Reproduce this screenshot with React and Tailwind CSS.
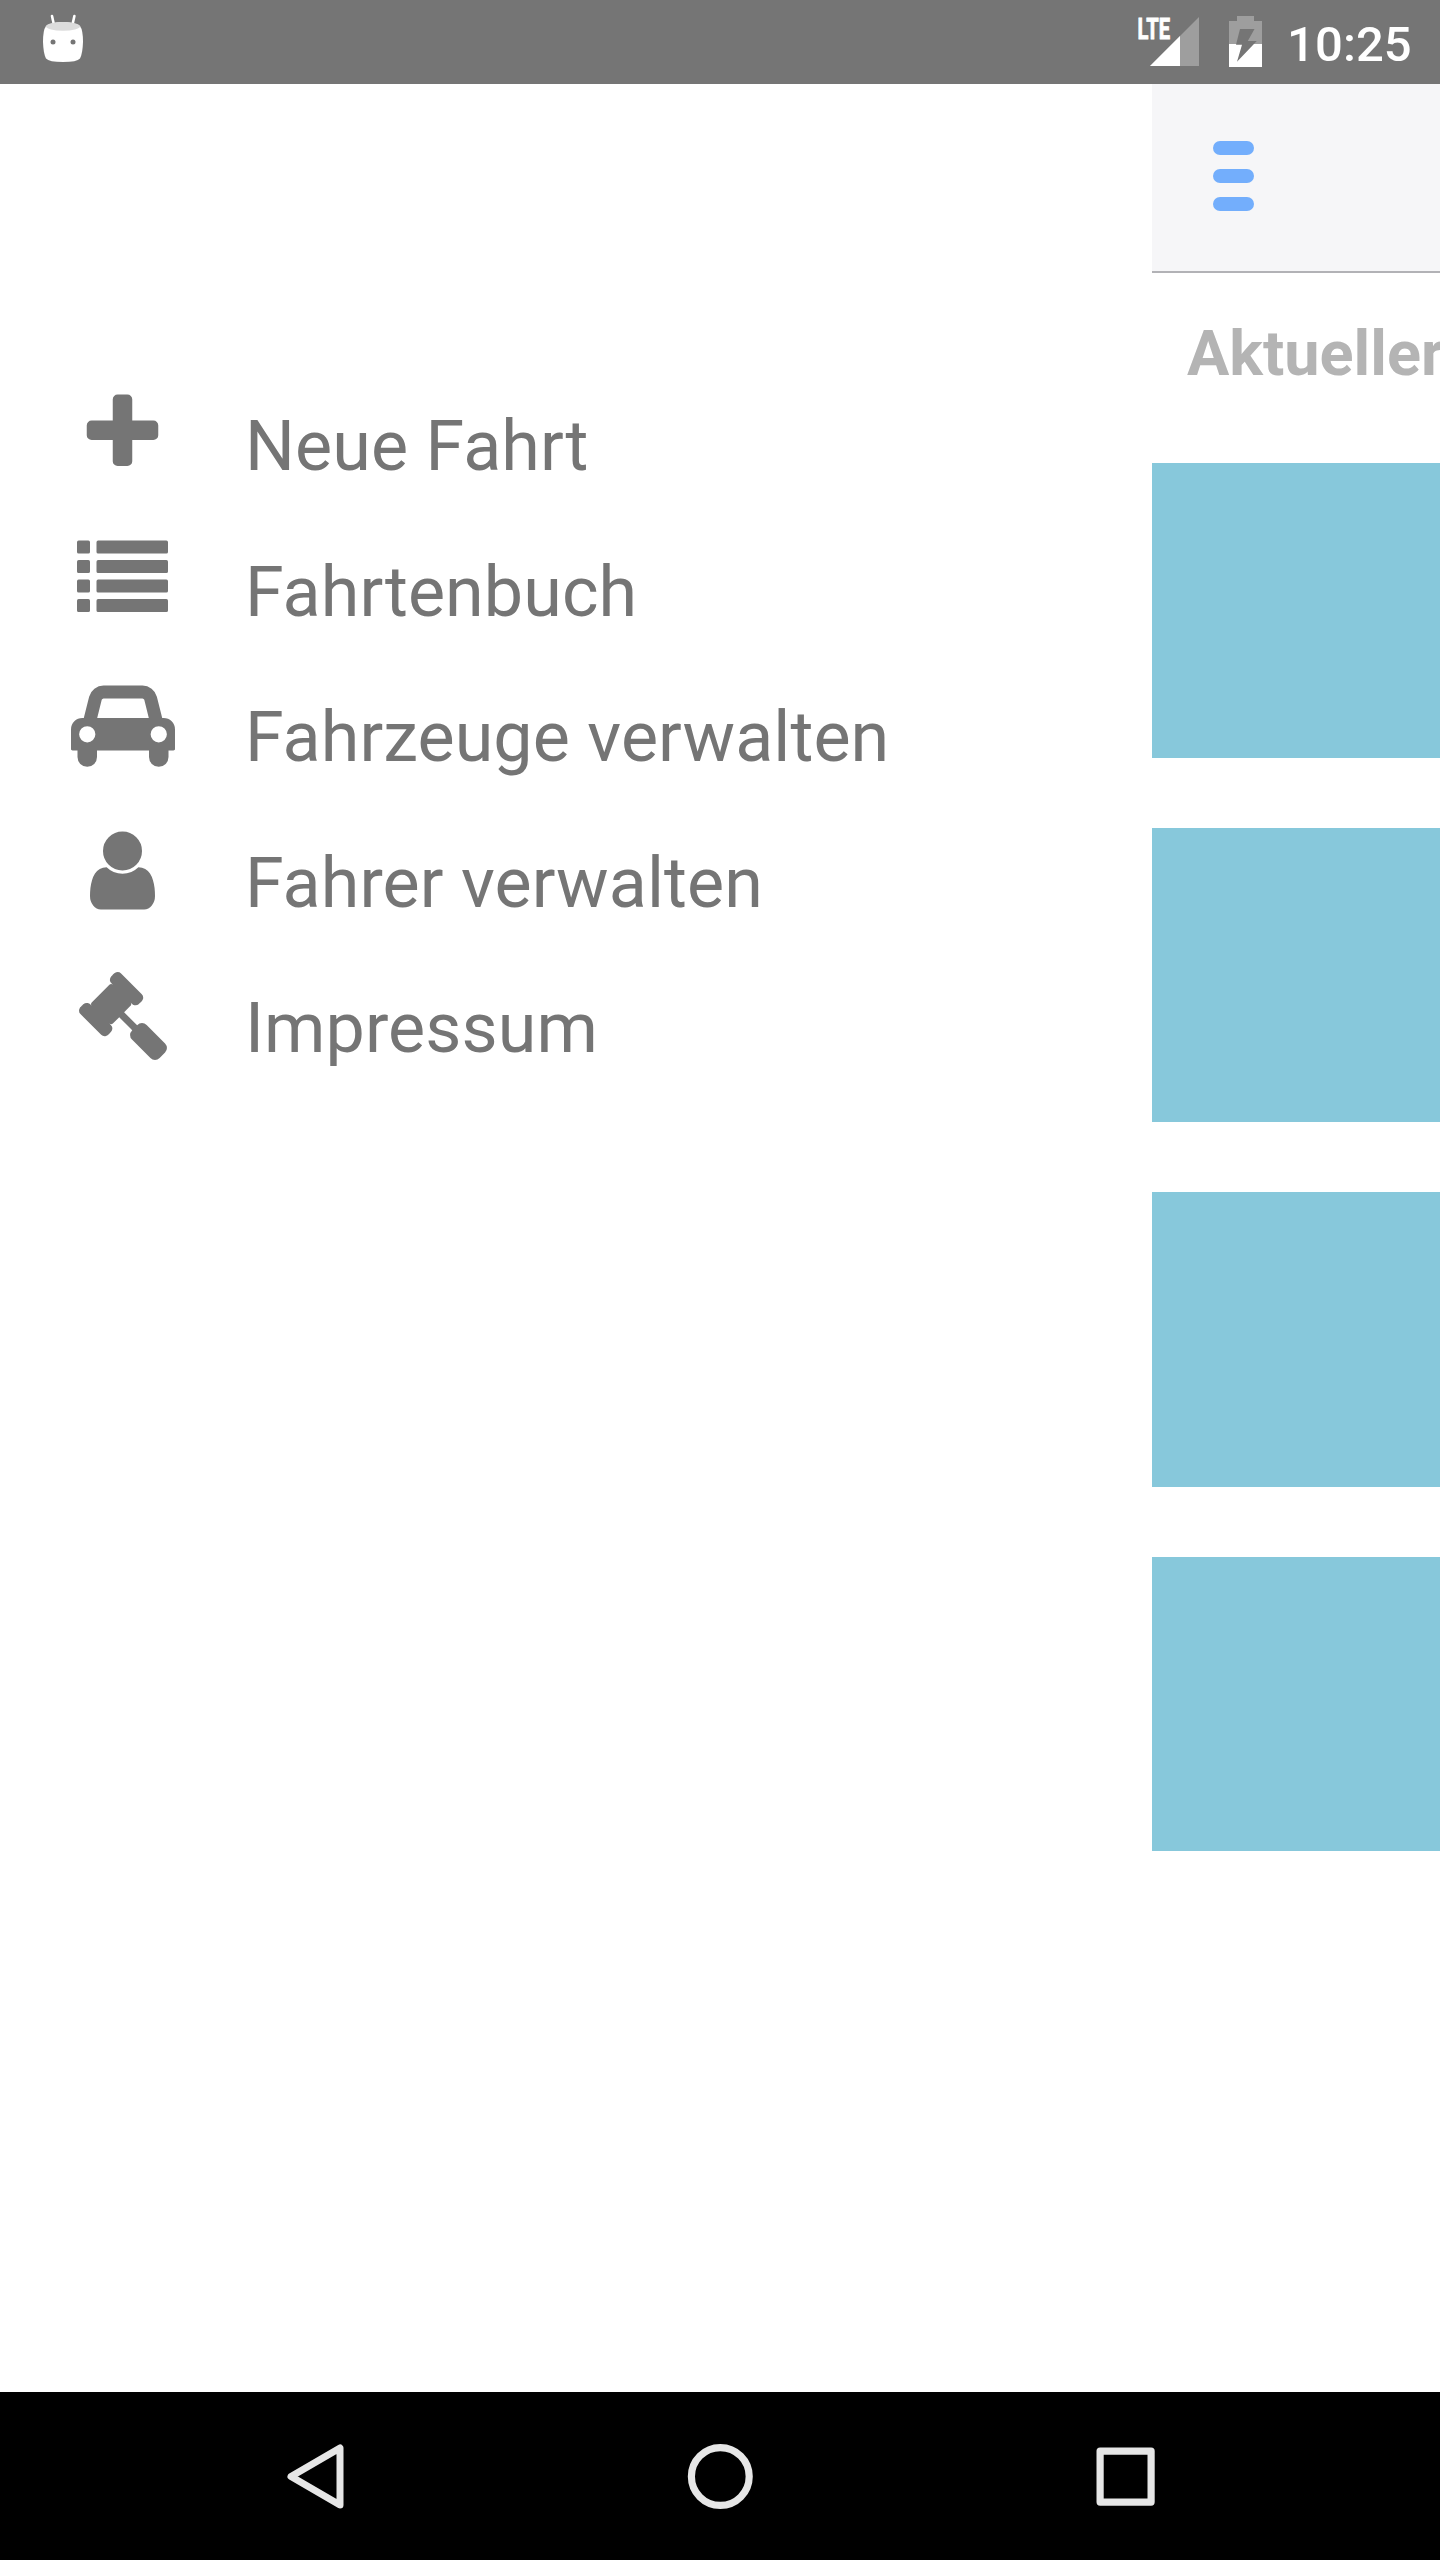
const ICONS = {
  plus: {
    w: 'w-[91px]', vb: '0 0 1792 1792',
    d: 'M1600 736v192q0 40-28 68t-68 28h-416v416q0 40-28 68t-68 28h-192q-40 0-68-28t-28-68v-416h-416q-40 0-68-28t-28-68v-192q0-40 28-68t68-28h416v-416q0-40 28-68t68-28h192q40 0 68 28t28 68v416h416q40 0 68 28t28 68z',
  },
  list: {
    w: 'w-[91px]', vb: '0 0 1792 1792',
    d: 'M32 128h192a32 32 0 0 1 32 32v192a32 32 0 0 1-32 32h-192a32 32 0 0 1-32-32v-192a32 32 0 0 1 32-32zM32 512h192a32 32 0 0 1 32 32v192a32 32 0 0 1-32 32h-192a32 32 0 0 1-32-32v-192a32 32 0 0 1 32-32zM32 896h192a32 32 0 0 1 32 32v192a32 32 0 0 1-32 32h-192a32 32 0 0 1-32-32v-192a32 32 0 0 1 32-32zM32 1280h192a32 32 0 0 1 32 32v192a32 32 0 0 1-32 32h-192a32 32 0 0 1-32-32v-192a32 32 0 0 1 32-32zM416 128h1344a32 32 0 0 1 32 32v192a32 32 0 0 1-32 32h-1344a32 32 0 0 1-32-32v-192a32 32 0 0 1 32-32zM416 512h1344a32 32 0 0 1 32 32v192a32 32 0 0 1-32 32h-1344a32 32 0 0 1-32-32v-192a32 32 0 0 1 32-32zM416 896h1344a32 32 0 0 1 32 32v192a32 32 0 0 1-32 32h-1344a32 32 0 0 1-32-32v-192a32 32 0 0 1 32-32zM416 1280h1344a32 32 0 0 1 32 32v192a32 32 0 0 1-32 32h-1344a32 32 0 0 1-32-32v-192a32 32 0 0 1 32-32z',
  },
  car: {
    w: 'w-[104px]', vb: '0 0 2048 1792',
    d: 'M480 1088q0-66-47-113t-113-47-113 47-47 113 47 113 113 47 113-47 47-113zm36-320h1016l-89-357q-2-8-14-17.500t-21-9.500h-768q-9 0-21 9.500t-14 17.500zm1372 320q0-66-47-113t-113-47-113 47-47 113 47 113 113 47 113-47 47-113zm160-96v384q0 14-9 23t-23 9h-96v128q0 80-56 136t-136 56-136-56-56-136v-128h-1024v128q0 80-56 136t-136 56-136-56-56-136v-128h-96q-14 0-23-9t-9-23v-384q0-93 65.500-158.500t158.500-65.500h28l105-419q23-94 104-157.500t179-63.500h768q98 0 179 63.500t104 157.500l105 419h28q93 0 158.500 65.500t65.500 158.500z',
  },
  user: {
    w: 'w-[91px]', vb: '0 0 1792 1792',
    d: 'M1536 1399q0 109-62.5 187t-150.5 78h-854q-88 0-150.5-78t-62.5-187q0-85 8.5-160.5t31.5-152 58.5-131 94-89 134.5-34.5q131 128 313 128t313-128q76 0 134.5 34.5t94 89 58.5 131 31.500 152 8.500 160.500zm-256-887q0 159-112.5 271.500t-271.500 112.500-271.500-112.500-112.500-271.500 112.500-271.500 271.500-112.500 271.500 112.500 112.500 271.500z',
  },
  gavel: {
    w: 'w-[91px]', vb: '0 0 1792 1792',
    d: 'M1771 1536q0 53-37 90l-107 108q-39 37-91 37-53 0-90-37l-363-364q-38-36-38-90 0-53 43-96l-256-256-126 126q-14 14-34 14t-34-14q2 2 12.5 12t12.5 13 10 11.5 10 13.5 6 13.5 5.5 16.5 1.5 18q0 38-28 68-3 3-16.5 18t-19 20.500-18.500 16.500-22 15.500-22 9-26 4.500q-40 0-68-28l-408-408q-28-28-28-68 0-13 4.500-26t9-22 15.500-22 16.500-18.500 20.500-19 18-16.500q30-28 68-28 10 0 18 1.500t16.500 5.500 13.500 6 13.500 10 11.500 10 13 12.500 12 12.500q-14-14-14-34t14-34l348-348q14-14 34-14t34 14q-2-2-12.500-12t-12.500-13-10-11.500-10-13.500-6-13.500-5.500-16.500-1.500-18q0-38 28-68 3-3 16.500-18t19-20.500 18.500-16.500 22-15.500 22-9 26-4.500q40 0 68 28l408 408q28 28 28 68 0 13-4.500 26t-9 22-15.500 22-16.500 18.500-20.500 19-18 16.500q-30 28-68 28-10 0-18-1.500t-16.500-5.500-13.500-6-13.500-10-11.500-10-13-12.500-12-12.500q14 14 14 34t-14 34l-126 126 256 256q43-43 96-43 52 0 91 37l363 363q37 39 37 91z',
  },
};

const MENU = [
  { icon: 'plus', label: 'Neue Fahrt' },
  { icon: 'list', label: 'Fahrtenbuch' },
  { icon: 'car', label: 'Fahrzeuge verwalten' },
  { icon: 'user', label: 'Fahrer verwalten' },
  { icon: 'gavel', label: 'Impressum' },
];

function StatusBar() {
  return (
    <header className="flex h-[84px] shrink-0 items-start justify-between bg-[#757575] text-white">
      <svg className="ml-[42px] mt-[13px] h-[50px] w-[42px]" viewBox="42 13 42 50">
        <path d="M52 16l2 9M74.400 16l-2 9" stroke="#fff" strokeWidth="2.600" strokeLinecap="round" />
        <path d="M46 26Q54 22 63 22T80 26Q83 30 83 42Q82.500 54 80 58.500Q77 62 63 62T46 58.500Q43.500 54 43 42Q43 30 46 26Z" fill="#fff" />
        <ellipse cx="63" cy="26.300" rx="17" ry="4.400" fill="#dcdcdc" />
        <circle cx="53" cy="42" r="2.500" fill="#757575" />
        <circle cx="73" cy="42" r="2.500" fill="#757575" />
      </svg>
      <div className="flex items-start">
        <svg className="mt-[5px] h-[64px] w-[71px]" viewBox="1130 5 71 64">
          <path d="M1199 17V66H1150Z" fill="#9e9e9e" />
          <path d="M1180 36V66H1150Z" fill="#fff" />
          <text x="1137.500" y="39" fontFamily="Roboto, sans-serif" fontWeight="700" fontSize="29.500" fill="#fff" stroke="#fff" strokeWidth="0.900" textLength="32.500" lengthAdjust="spacingAndGlyphs">LTE</text>
        </svg>
        <svg className="ml-[27px] mt-[15px] h-[54px] w-[36px]" viewBox="1228 15 36 54">
          <path d="M1237 16h17v5h8v46h-33v-46h8z" fill="#9e9e9e" />
          <path d="M1229 44h33v23h-33z" fill="#fff" />
          <path d="M1240 29h14.500l-6.700 12h9l-19.800 20.700 5-17h-6z" fill="#757575" />
        </svg>
        <span className="mt-[16px] w-[176px] pl-[23px] text-[49px] font-medium leading-[58px] tracking-[0.100px]">10:25</span>
      </div>
    </header>
  );
}

function Drawer() {
  return (
    <nav className="w-[1152px] shrink-0 pt-[304px] text-[#757575]">
      {MENU.map(({ icon, label }) => (
        <div key={label} className="flex h-[145.600px] items-start">
          <div className="flex w-[245px] shrink-0 justify-center">
            <svg className={`h-[91px] ${ICONS[icon].w}`} viewBox={ICONS[icon].vb} fill="currentColor">
              <path d={ICONS[icon].d} />
            </svg>
          </div>
          <span className="mt-[17px] whitespace-nowrap text-[70px] leading-[82px] tracking-[0.080px]">{label}</span>
        </div>
      ))}
    </nav>
  );
}

function Content() {
  return (
    <section className="w-[288px] shrink-0 overflow-hidden">
      <div className="flex h-[189px] items-start border-b-2 border-[#b2b2b6] bg-[#f6f6f8] pl-[61px] pt-[57px]">
        <div className="flex flex-col gap-[14px]">
          <div className="h-[14px] w-[41px] rounded-full bg-[#73aefc]" />
          <div className="h-[14px] w-[41px] rounded-full bg-[#73aefc]" />
          <div className="h-[14px] w-[41px] rounded-full bg-[#73aefc]" />
        </div>
      </div>
      <h1 className="h-[190px] whitespace-nowrap pl-[35px] pt-[44px] text-[63px] font-bold leading-[74px] text-[#b4b4b4]">Aktueller</h1>
      <div className="flex flex-col gap-[70px]">
        <div className="h-[294.600px] bg-[#87c8db]" />
        <div className="h-[294.600px] bg-[#87c8db]" />
        <div className="h-[294.600px] bg-[#87c8db]" />
        <div className="h-[294.600px] bg-[#87c8db]" />
      </div>
    </section>
  );
}

function NavBar() {
  return (
    <footer className="flex h-[168px] shrink-0 items-center bg-black pl-[284px]">
      <svg className="h-[70px] w-[64px]" viewBox="284 2441 64 70" fill="none" stroke="#e6e6e6" strokeWidth="7" strokeLinejoin="round">
        <path d="M340 2448V2505L291 2476.500Z" />
      </svg>
      <svg className="ml-[337px] h-[70px] w-[70px]" viewBox="685 2441 70 70" fill="none" stroke="#e6e6e6" strokeWidth="7.200">
        <circle cx="720.300" cy="2476.500" r="28.900" />
      </svg>
      <svg className="ml-[336px] h-[70px] w-[70px]" viewBox="1091 2441 70 70" fill="none" stroke="#e6e6e6" strokeWidth="7.200" strokeLinejoin="round">
        <path d="M1100.100 2451.100h51v51h-51z" />
      </svg>
    </footer>
  );
}

export default function App() {
  return (
    <div className="flex h-[2560px] w-[1440px] flex-col overflow-hidden bg-white font-[Roboto,sans-serif]">
      <StatusBar />
      <main className="flex min-h-0 flex-1">
        <Drawer />
        <Content />
      </main>
      <NavBar />
    </div>
  );
}
